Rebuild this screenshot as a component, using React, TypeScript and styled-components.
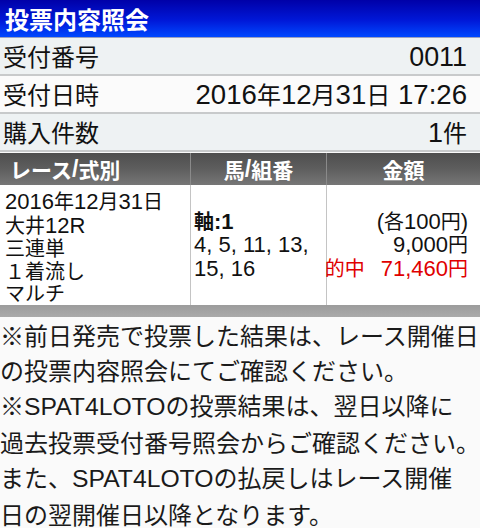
import { FC, ReactNode } from 'react';
import styled, { createGlobalStyle } from 'styled-components';

const GlobalStyle = createGlobalStyle`
	html, body {
		margin: 0;
		padding: 0;
		background: #fafafa;
	}
	body {
		font-family: "Noto Sans CJK JP", "Liberation Sans", sans-serif;
		color: #111;
	}
`;

interface IInfoRowProps {
	label: string;
	value: ReactNode;
	shade?: boolean;
}

const InfoRow: FC<IInfoRowProps> = ({ label, value, shade }) => {
	return (
		<Row $shade={shade}>
			<span>{label}</span>
			<span>{value}</span>
		</Row>
	);
};

const App: FC = () => {
	return (
		<>
			<GlobalStyle />
			<Page>
				<TitleBar>投票内容照会</TitleBar>
				<InfoRow label="受付番号" value={<Lat $scale={1.12}>0011</Lat>} shade />
				<InfoRow
					label="受付日時"
					value={
						<>
							<Lat $scale={1.15}>2016</Lat>年<Lat $scale={1.15}>12</Lat>月
							<Lat $scale={1.15}>31</Lat>日<Lat $scale={1.15}> 17:26</Lat>
						</>
					}
				/>
				<InfoRow
					label="購入件数"
					value={
						<>
							<Lat $scale={1.12}>1</Lat>件
						</>
					}
					shade
				/>

				<Table>
					<HeadCell $align="left">
						レース<Lat>/</Lat>式別
					</HeadCell>
					<HeadCell $align="center">
						馬<Lat>/</Lat>組番
					</HeadCell>
					<HeadCell $align="center">金額</HeadCell>

					<BodyCell>
						<div>
							<Lat>2016</Lat>年<Lat>12</Lat>月<Lat>31</Lat>日
						</div>
						<div>
							大井<Lat>12R</Lat>
						</div>
						<div>三連単</div>
						<div>１着流し</div>
						<div>マルチ</div>
					</BodyCell>
					<BodyCell $middle>
						<Axis>
							軸<Lat>:1</Lat>
						</Axis>
						<div>
							<Lat>4, 5, 11, 13,</Lat>
						</div>
						<div>
							<Lat>15, 16</Lat>
						</div>
					</BodyCell>
					<BodyCell $middle $right>
						<div>
							<Lat>(</Lat>各<Lat>100</Lat>円<Lat>)</Lat>
						</div>
						<div>
							<Lat>9,000</Lat>円
						</div>
						<Hit>
							的中
							<HitAmount>
								<Lat>71,460</Lat>円
							</HitAmount>
						</Hit>
					</BodyCell>
				</Table>
				<TableFoot />

				<Notes>
					<NoteLine>※前日発売で投票した結果は、レース開催日</NoteLine>
					<NoteLine>の投票内容照会にてご確認ください。</NoteLine>
					<NoteLine>
						※<Lat $scale={1.03}>SPAT4LOTO</Lat>の投票結果は、翌日以降に
					</NoteLine>
					<NoteLine>過去投票受付番号照会からご確認ください。</NoteLine>
					<NoteLine>
						また、<Lat $scale={1.03}>SPAT4LOTO</Lat>の払戻しはレース開催
					</NoteLine>
					<NoteLine>日の翌開催日以降となります。</NoteLine>
				</Notes>
			</Page>
		</>
	);
};

const Page = styled.div`
	width: 480px;
	height: 528px;
	overflow: hidden;
	background: #fafafa;
`;

// latin runs are drawn a bit larger than the kana, as on the device
const Lat = styled.span<{ $scale?: number }>`
	font-family: "Liberation Sans", "Noto Sans CJK JP", sans-serif;
	font-size: ${({ $scale }) => $scale ?? 1.1}em;
`;

const TitleBar = styled.div`
	height: 37px;
	padding-left: 5px;
	display: flex;
	align-items: center;
	background: linear-gradient(to bottom, #0000a8 0%, #0018d8 55%, #0048ff 100%);
	color: #fff;
	font-size: 24px;
	font-weight: bold;
	border-bottom: 1px solid #9aa0c0;
`;

const Row = styled.div<{ $shade?: boolean }>`
	height: 36px;
	padding: 0 13px 0 3px;
	display: flex;
	align-items: center;
	justify-content: space-between;
	font-size: 24px;
	line-height: 36px;
	white-space: nowrap;
	background: ${({ $shade }) => ($shade ? '#eef2f3' : '#fbfbfb')};
	border-bottom: 2px solid #c8cacb;
`;

const Table = styled.div`
	margin-top: 1px;
	display: grid;
	grid-template-columns: 190px 136px 154px;
	grid-template-rows: 32px 120px;
	background: #fff;
`;

const HeadCell = styled.div<{ $align: 'left' | 'center' }>`
	display: flex;
	align-items: center;
	justify-content: ${({ $align }) => ($align === 'left' ? 'flex-start' : 'center')};
	padding-left: ${({ $align }) => ($align === 'left' ? '10px' : '0')};
	background: linear-gradient(to bottom, #4e4e4e 0%, #5e5e5e 50%, #767676 100%);
	color: #fff;
	font-size: 21px;
	font-weight: bold;
	white-space: nowrap;
	border-left: 1px solid #8a8a8a;

	&:first-child {
		border-left: none;
	}
`;

const BodyCell = styled.div<{ $middle?: boolean; $right?: boolean }>`
	display: flex;
	flex-direction: column;
	justify-content: ${({ $middle }) => ($middle ? 'center' : 'flex-start')};
	align-items: ${({ $right }) => ($right ? 'flex-end' : 'flex-start')};
	padding: ${({ $middle, $right }) =>
		$right ? '0 12px 0 0' : $middle ? '0 0 0 3px' : '5px 0 0 5px'};
	font-size: 20px;
	line-height: 22.5px;
	white-space: nowrap;
	border-left: 1px solid #c4c4c4;

	&:nth-child(4) {
		border-left: none;
	}
`;

const Axis = styled.div`
	font-weight: bold;
`;

const Hit = styled.div`
	color: #e00000;
`;

const HitAmount = styled.span`
	margin-left: 16px;
`;

const TableFoot = styled.div`
	height: 12px;
	background: linear-gradient(to bottom, #9c9c9c 0%, #aaaaaa 100%);
`;

const Notes = styled.div`
	font-size: 24px;
	line-height: 35px;
	color: #1a1a1a;
`;

const NoteLine = styled.div`
	white-space: nowrap;
`;

export default App;
